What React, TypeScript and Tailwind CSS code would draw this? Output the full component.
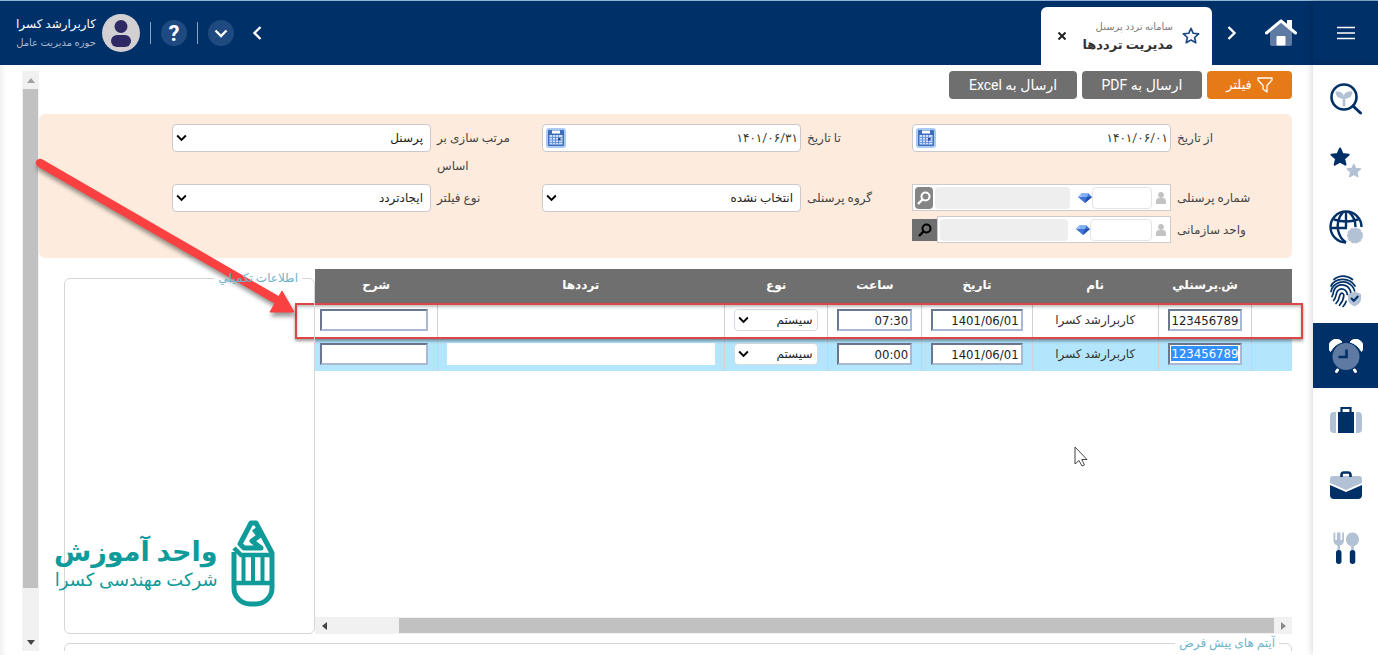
import React from "react";

const NAVY = "#003068";
const MIST = "#b3c1d4";

function SearchPlantIcon() {
  return (
    <svg viewBox="0 0 34 34" className="size-[34px]" fill="none">
      <circle cx="15" cy="15" r="12.500" stroke={NAVY} strokeWidth="2.600" />
      <path d="M24 24l7.500 7" stroke={NAVY} strokeWidth="3" strokeLinecap="round" />
      <path d="M6.500 9.500c4.500-.5 8 1 8.300 5C15 10.500 18.500 9 23.500 9.500c-.5 5-3 7-7.200 7v8h-2.600v-8c-4.200 0-6.700-2-7.200-7z" fill={MIST} />
    </svg>
  );
}

const STAR = "M12 1.800l3 6.600 7.200.8-5.400 4.800 1.600 7-6.400-3.600L5.600 21l1.600-7-5.400-4.800 7.200-.8z";

function StarsIcon() {
  return (
    <svg viewBox="0 0 34 34" className="size-[34px]">
      <path d={STAR} fill={NAVY} stroke={NAVY} strokeWidth="2.400" strokeLinejoin="round" transform="translate(1 1) scale(.84)" />
      <path d={STAR} fill={MIST} stroke={MIST} strokeWidth="2" strokeLinejoin="round" transform="translate(17 17) scale(.65)" />
    </svg>
  );
}

function GlobeIcon() {
  return (
    <svg viewBox="0 0 34 34" className="size-[34px]" fill="none" stroke={NAVY} strokeWidth="2.400">
      <path d="M32.500 17A15.500 15.500 0 1 0 17 32.500" />
      <path d="M5 9.500c7.500 2.500 16.500 2.500 24 0M2 18h16M17 1.500v15.500M14 2C9 8 8 14 9 20c1 5 3.500 9.500 8 12.500M20 2c4.500 4 6.500 9 6.500 15" />
      <circle cx="26" cy="25.500" r="7" fill={MIST} stroke={MIST} strokeWidth="2" strokeDasharray="3.200 .8" />
    </svg>
  );
}

function FingerprintIcon() {
  return (
    <svg viewBox="0 0 34 34" className="size-[34px]" fill="none" stroke={NAVY} strokeWidth="1.700" strokeLinecap="round">
      <path d="M5 5.500C10 1 18 1 23.500 5.500" />
      <path d="M2 12C6 4 20 2.500 26 12" />
      <path d="M2 17.500C4 8 16 4.500 23 12c1.300 1.500 2.200 3.200 2.600 5" />
      <path d="M3 22.500c1.500-2 1-4.500 2.500-7.500C9 9 18 9.500 21 16c.5 1 .8 2 .8 3" />
      <path d="M4.500 26.500c3-3 2-6.500 4-9.500 3-4 9.500-2 9.700 3.500" />
      <path d="M7 29.500c4-4 2.500-7 4.500-9.500 1.500-1.700 3.500-.5 3.300 1.800-.2 3.500-1.800 6.500-4.300 9.500" />
      <path d="M14 32.500c1.500-1.500 2.500-3.200 3.200-5.200" />
      <path d="M25.500 17.500l6.500 2.500v4.500c0 4-3 6.500-6.500 7.700-3.500-1.200-6.500-3.700-6.500-7.700V20z" fill={MIST} stroke="none" />
      <path d="M22.500 24.500l2.300 2.300 4-4.300" strokeWidth="2" />
    </svg>
  );
}

function AlarmIcon() {
  return (
    <svg viewBox="0 0 34 34" className="size-[34px]">
      <path d="M1.500 12.500A6.800 6.800 0 0 1 13 3C8 4.500 4.500 7.500 1.500 12.500zM32.500 12.500A6.800 6.800 0 0 0 21 3c5 1.500 8.500 4.500 11.500 9.500z" fill="#fff" stroke="#fff" strokeLinejoin="round" />
      <path d="M8.500 31l-1 1.500M25.500 31l1 1.500" stroke="#fff" strokeWidth="3" strokeLinecap="round" />
      <circle cx="17" cy="17.500" r="13.500" fill="#5f7aa2" />
      <path d="M17.500 10.500V18h-8" fill="none" stroke={NAVY} strokeWidth="2.600" />
    </svg>
  );
}

function SuitcaseIcon() {
  return (
    <svg viewBox="0 0 34 34" className="size-[34px]">
      <path d="M5 9h2v21H5a4 4 0 0 1-4-4V13a4 4 0 0 1 4-4zM29 9h-2v21h2a4 4 0 0 0 4-4V13a4 4 0 0 0-4-4z" fill={MIST} />
      <path d="M9 9h16v21H9z" fill={NAVY} />
      <path d="M12.500 9V5h9v4" fill="none" stroke={NAVY} strokeWidth="2.200" />
    </svg>
  );
}

function BriefcaseIcon() {
  return (
    <svg viewBox="0 0 34 34" className="size-[34px]">
      <path d="M4 9h26a3 3 0 0 1 3 3v4l-16 7L1 16v-4a3 3 0 0 1 3-3z" fill={MIST} />
      <path d="M1 18l16 7 16-7v10a4 4 0 0 1-4 4H5a4 4 0 0 1-4-4z" fill={NAVY} />
      <path d="M12.500 10V8c0-2 1-2.500 2.500-2.500h4c1.500 0 2.500.5 2.500 2.500v2" fill="none" stroke={NAVY} strokeWidth="2.600" />
    </svg>
  );
}

function CutleryIcon() {
  return (
    <svg viewBox="0 0 34 34" className="size-[34px]">
      <path d="M4.500 1.500v8c0 3 2 4.500 4 5v5h2.500v-5c2-.5 4-2 4-5v-8h-1.800v7.500h-1.700V1.500H8V9H6.300V1.500z" fill={MIST} />
      <path d="M23.500 1.500c4 0 6.500 3.500 6.500 7 0 3.300-2.200 6-5.200 6.700v4.300h-2.600v-4.300c-3-.7-5.200-3.400-5.200-6.700 0-3.500 2.500-7 6.500-7z" fill={MIST} />
      <rect x="7" y="19" width="5.500" height="14" rx="2.700" fill={NAVY} />
      <rect x="20.800" y="19" width="5.500" height="14" rx="2.700" fill={NAVY} />
    </svg>
  );
}

function HomeIcon() {
  return (
    <svg viewBox="0 0 34 30" className="h-[30px] w-[34px]">
      <path d="M6 14L17 4l11 10v12a2 2 0 0 1-2 2H8a2 2 0 0 1-2-2z" fill="#5f7ba3" />
      <path d="M23 2h5v9l-5-4.500z" fill="#fff" />
      <path d="M2.500 15L17 2.800 31.500 15" fill="none" stroke="#fff" strokeWidth="3" strokeLinejoin="round" strokeLinecap="round" />
      <rect x="12.500" y="18" width="9" height="9.500" rx="1" fill="#fff" />
    </svg>
  );
}

function Chevron({ d, className }: { d: "left" | "right" | "down"; className?: string }) {
  const path = d === "left" ? "M9.500 1L3.500 7l6 6" : d === "right" ? "M4.500 1l6 6-6 6" : "M1.500 4.500L7 10l5.500-5.500";
  return (
    <svg viewBox="0 0 14 14" className={className} fill="none" stroke="currentColor" strokeWidth="2.400">
      <path d={path} />
    </svg>
  );
}

function CalendarIcon() {
  return (
    <svg viewBox="0 0 20 20" className="size-5">
      <rect width="20" height="20" rx="3" fill="#a9caf5" />
      <rect x="2" y="2" width="16" height="16" rx="1" fill="#3f6dbd" />
      <rect x="6" y="2.500" width="8" height="3" fill="#fff" />
      <rect x="3.500" y="7" width="13" height="9.500" fill="#cfe0f8" />
      <path d="M3.500 9.500h13M3.500 12h13M3.500 14.500h13M6.500 7v9.500M9.500 7v9.500M12.500 7v9.500" stroke="#5b86cf" strokeWidth=".8" />
      <rect x="12" y="10" width="2.500" height="2.500" fill="#2b4c93" />
    </svg>
  );
}

function PersonIcon() {
  return (
    <svg viewBox="0 0 10 12" className="h-3 w-[10px] shrink-0" fill="#c3c3c3">
      <circle cx="5" cy="3" r="2.900" />
      <path d="M0 8.500C0 6.500 2 6 5 6s5 .5 5 2.500V12H0z" />
    </svg>
  );
}

function GemIcon() {
  return (
    <svg viewBox="0 0 14 10" className="h-[10px] w-[14px] shrink-0">
      <path d="M3.500.5h7L14 4 7 10 0 4z" fill="#3f74d6" />
      <path d="M3.500.5h7L9 4H5z" fill="#7fb0f5" />
      <path d="M9 4h5l-7 6z" fill="#2450a8" />
      <path d="M0 4l3.500-3.500L5 4z" fill="#9cc3fa" />
    </svg>
  );
}

function Lens() {
  return (
    <svg viewBox="0 0 14 14" className="size-[14px]" fill="none" stroke="currentColor" strokeWidth="2">
      <circle cx="8.500" cy="5.500" r="4" />
      <path d="M5.500 8.500L1 13" strokeWidth="2.400" />
    </svg>
  );
}

const menu = [
  { name: "جستجو", icon: <SearchPlantIcon /> },
  { name: "علاقه‌مندی‌ها", icon: <StarsIcon /> },
  { name: "پورتال", icon: <GlobeIcon /> },
  { name: "اثر انگشت", icon: <FingerprintIcon /> },
  { name: "تردد", icon: <AlarmIcon />, active: true },
  { name: "ماموریت", icon: <SuitcaseIcon /> },
  { name: "پرسنل", icon: <BriefcaseIcon /> },
  { name: "تغذیه", icon: <CutleryIcon /> },
];

function Header() {
  return (
    <header className="flex h-[65px] shrink-0 items-stretch border-t border-[#8fb4d6] bg-[#003068] text-white">
      <button aria-label="منو" className="flex w-[65px] items-center justify-center shadow-[0_0_8px_rgba(0,0,0,0.25)]">
        <svg viewBox="0 0 18 14" className="h-[14px] w-[18px]" stroke="#fff" strokeWidth="1.700">
          <path d="M0 1.500h18M0 7h18M0 12.500h18" />
        </svg>
      </button>
      <a href="#home" aria-label="خانه" className="mr-[15px] flex items-center">
        <HomeIcon />
      </a>
      <button aria-label="تب بعدی" className="ml-3 mr-[26px] flex items-center">
        <Chevron d="right" className="size-[14px]" />
      </button>
      <div className="mt-[6px] flex w-[171px] items-center rounded-t-md bg-white pr-3">
        <svg viewBox="0 0 24 24" className="size-[18px]" fill="none" stroke="#1d4a86" strokeWidth="2.200" strokeLinejoin="round">
          <path d={STAR} />
        </svg>
        <div className="mr-[9px] flex-1 whitespace-nowrap">
          <div className="text-[10px] leading-[17px] text-[#7c7c7c]">سامانه تردد پرسنل</div>
          <div className="text-[13px] font-bold leading-5 text-[#333]">مدیریت ترددها</div>
        </div>
        <button aria-label="بستن" className="ml-[17px] text-[#222]">
          <svg viewBox="0 0 8 8" className="size-2" stroke="currentColor" strokeWidth="2">
            <path d="M.5.5l7 7M7.500.5l-7 7" />
          </svg>
        </button>
      </div>
      <div className="flex-1" />
      <div className="flex items-center pl-4">
        <button aria-label="تب قبلی" className="ml-[17px]">
          <Chevron d="left" className="size-[14px]" />
        </button>
        <button aria-label="بیشتر" className="flex size-[26px] items-center justify-center rounded-full bg-[#1f4a80]">
          <Chevron d="down" className="size-[14px]" />
        </button>
        <span className="mx-[10px] h-[22px] w-px bg-[#8ba3c2]" />
        <button aria-label="راهنما" className="flex size-[26px] items-center justify-center rounded-full bg-[#1f4a80] font-[Roboto,sans-serif] text-[22px] font-bold">
          ?
        </button>
        <span className="mx-[10px] h-[22px] w-px bg-[#8ba3c2]" />
        <svg viewBox="0 0 38 38" className="size-[38px]">
          <circle cx="19" cy="19" r="19" fill="#d3d0d4" />
          <circle cx="19" cy="12.500" r="6.500" fill="#2f2a63" />
          <rect x="9" y="21" width="20" height="12" rx="6" fill="#2f2a63" />
        </svg>
        <div className="mr-[6px] whitespace-nowrap">
          <div className="text-xs leading-[19px]">کاربرارشد کسرا</div>
          <div className="text-[10px] leading-[18px] text-[#a9bad1]">حوزه مدیریت عامل</div>
        </div>
      </div>
    </header>
  );
}

function Field({ id, label, children }: { id: string; label: string; children: React.ReactNode }) {
  return (
    <div className="flex items-start gap-[6px]">
      <label htmlFor={id} className="w-[75px] shrink-0 text-left text-xs leading-7 text-[#444]">
        {label}
      </label>
      <div className="min-w-0 flex-1">{children}</div>
    </div>
  );
}

function DateBox({ id, value }: { id: string; value: string }) {
  return (
    <div className="flex h-7 items-center rounded border border-[#cdc8cc] bg-white pl-[3px]">
      <input id={id} defaultValue={value} className="h-full min-w-0 flex-1 bg-transparent pr-[2px] text-right text-xs text-[#333] outline-none" />
      <button aria-label="تقویم">
        <CalendarIcon />
      </button>
    </div>
  );
}

function SelectBox({ id, value }: { id: string; value: string }) {
  return (
    <div className="relative">
      <select id={id} className="h-7 w-full appearance-none rounded border border-[#cdc8cc] bg-white pr-[7px] text-xs text-[#222]">
        <option>{value}</option>
      </select>
      <Chevron d="down" className="pointer-events-none absolute left-1 top-2 size-[11px] text-black" />
    </div>
  );
}

function Filters() {
  return (
    <section className="grid grid-cols-3 gap-x-[30px] gap-y-1 rounded-md bg-[#fdecdd] pb-[14px] pl-[133px] pr-10 pt-[10px]">
      <Field id="from" label="از تاریخ">
        <DateBox id="from" value="۱۴۰۱/۰۶/۰۱" />
      </Field>
      <Field id="to" label="تا تاریخ">
        <DateBox id="to" value="۱۴۰۱/۰۶/۳۱" />
      </Field>
      <Field id="sort" label="مرتب سازی بر اساس">
        <SelectBox id="sort" value="پرسنل" />
      </Field>
      <Field id="person" label="شماره پرسنلی">
        <div className="flex h-[27px] items-center border border-[#cfcacb] bg-white pl-[2px] pr-1">
          <PersonIcon />
          <input id="person" className="mr-1 h-[22px] w-[60px] rounded border border-[#e4e4e4] bg-white" />
          <span className="flex w-[22px] justify-start">
            <GemIcon />
          </span>
          <input aria-label="نام پرسنل" readOnly className="h-[22px] min-w-0 flex-1 rounded bg-[#eeeeee]" />
          <button aria-label="جستجوی پرسنل" className="mr-[2px] flex h-[22px] w-[18px] items-center justify-center rounded-sm bg-[#858585] text-white">
            <Lens />
          </button>
        </div>
      </Field>
      <Field id="group" label="گروه پرسنلی">
        <SelectBox id="group" value="انتخاب نشده" />
      </Field>
      <Field id="kind" label="نوع فیلتر">
        <SelectBox id="kind" value="ایجادتردد" />
      </Field>
      <Field id="unit" label="واحد سازمانی">
        <div className="flex h-[27px] items-center">
          <div className="flex h-full min-w-0 flex-1 items-center border border-[#cfcacb] bg-white pl-[2px] pr-1">
            <PersonIcon />
            <input id="unit" className="mr-1 h-[22px] w-[62px] rounded border border-[#e4e4e4] bg-white" />
            <span className="flex w-[22px] justify-start">
              <GemIcon />
            </span>
            <input aria-label="نام واحد" readOnly className="h-[22px] min-w-0 flex-1 rounded bg-[#eeeeee]" />
          </div>
          <button aria-label="جستجوی واحد" className="flex h-[22px] w-[25px] items-center justify-center bg-[#6f6f6f] text-black">
            <Lens />
          </button>
        </div>
      </Field>
    </section>
  );
}

const rows = [
  { code: "123456789", name: "کاربرارشد کسرا", date: "1401/06/01", time: "07:30", kind: "سیستم", selected: false },
  { code: "123456789", name: "کاربرارشد کسرا", date: "1401/06/01", time: "00:00", kind: "سیستم", selected: true },
];

const gridInput =
  "block h-[22px] w-full border-2 border-b-[#a9b8d3] border-l-[#6b7790] border-r-[#a9b8d3] border-t-[#6b7790] bg-white pr-[2px] text-right font-['DejaVu_Sans_Condensed','DejaVu_Sans',sans-serif] text-[13px] leading-[18px] text-[#222]";

function Records() {
  const cell = "border-l border-[#d5cfd2] px-[9px] py-0";
  return (
    <div className="relative flex min-w-0 flex-1 flex-col">
      <table className="w-full table-fixed border-collapse">
        <colgroup>
          <col className="w-[4.1%]" />
          <col className="w-[9.6%]" />
          <col className="w-[12.9%]" />
          <col className="w-[11.3%]" />
          <col className="w-[9.6%]" />
          <col className="w-[10.6%]" />
          <col className="w-[29.4%]" />
          <col className="w-[12.5%]" />
        </colgroup>
        <thead>
          <tr className="h-[34px] bg-[#6f6f6f] text-xs text-white">
            <th />
            {["ش.پرسنلي", "نام", "تاریخ", "ساعت", "نوع", "ترددها", "شرح"].map((h) => (
              <th key={h} className="pb-[2px] font-semibold">
                {h}
              </th>
            ))}
          </tr>
        </thead>
        <tbody>
          {rows.map((r, i) => (
            <tr key={i} className={r.selected ? "h-[34px] bg-[#b3e5fd]" : "h-[34px] bg-white"}>
              <td className={cell} />
              <td className={cell}>
                {r.selected ? (
                  <div className={gridInput}>
                    <span className="bg-[#3390ff] text-white">{r.code}</span>
                  </div>
                ) : (
                  <input aria-label="شماره پرسنلی" defaultValue={r.code} className={gridInput} />
                )}
              </td>
              <td className={cell + " text-center text-xs text-[#333]"}>{r.name}</td>
              <td className={cell}>
                <input aria-label="تاریخ" defaultValue={r.date} className={gridInput} />
              </td>
              <td className={cell}>
                <input aria-label="ساعت" defaultValue={r.time} className={gridInput} />
              </td>
              <td className={cell}>
                <div className="relative">
                  <select aria-label="نوع" className="block h-[22px] w-full appearance-none rounded border border-[#d5d9e2] bg-white pr-[5px] text-xs text-[#222]">
                    <option>{r.kind}</option>
                  </select>
                  <Chevron d="down" className="pointer-events-none absolute left-1 top-[5px] size-[11px] text-black" />
                </div>
              </td>
              <td className={cell}>{r.selected && <input aria-label="ترددها" className="block h-[22px] w-full bg-white" />}</td>
              <td className="py-0 pl-[5px] pr-[9px]">
                <input aria-label="شرح" className={gridInput} />
              </td>
            </tr>
          ))}
        </tbody>
      </table>
      <div className="flex-1" />
      <div className="flex h-[17px] items-stretch bg-[#f1f1f1]">
        <span className="flex w-[18px] items-center justify-center">
          <svg viewBox="0 0 5 8" className="h-2 w-[5px]" fill="#8a8a8a"><path d="M0 0l5 4-5 4z" /></svg>
        </span>
        <div className="flex min-w-0 flex-1 py-px">
          <div className="w-[93%] bg-[#c1c1c1]" />
        </div>
        <span className="flex w-[18px] items-center justify-center">
          <svg viewBox="0 0 5 8" className="h-2 w-[5px]" fill="#444"><path d="M5 0L0 4l5 4z" /></svg>
        </span>
      </div>

      <div className="pointer-events-none absolute -left-5 -right-[11px] top-[34px] h-9 border-[2px] border-[#dd4546] shadow-[0_2px_3px_rgba(0,0,0,0.4),inset_0_2px_3px_rgba(0,0,0,0.25)]" />
      <svg viewBox="0 0 290 180" className="pointer-events-none absolute -left-[285px] -top-[118px] h-[180px] w-[290px] drop-shadow-[1px_4px_2px_rgba(0,0,0,0.4)]">
        <path d="M10 12L247 149" stroke="#f94141" strokeWidth="8.500" strokeLinecap="round" />
        <path d="M264 161L240 161 252 140z" fill="#f94141" stroke="#f94141" strokeWidth="1" strokeLinejoin="round" />
      </svg>
      <svg viewBox="0 0 14 21" className="pointer-events-none absolute right-[204px] top-[177px] h-[21px] w-[14px]">
        <path d="M1 1v17l4-3.500 3 5.500 2.500-1.200-2.800-5.300H13z" fill="#fff" stroke="#444" />
      </svg>
    </div>
  );
}

function Watermark() {
  return (
    <div className="absolute -left-[11px] bottom-[26px] flex items-center gap-[13px] whitespace-nowrap text-[#0f9b99]">
      <svg viewBox="0 0 44 87" className="h-[87px] w-11" fill="none" stroke="currentColor" strokeWidth="5">
        <path d="M3 32v36a16 16 0 0 0 16 16h6a16 16 0 0 0 16-16V33L25 3h-5L9 24l4 4h17l-9-7 7-5-5-7" strokeLinejoin="round" />
        <path d="M3 28l7 7h31M3 63h38" strokeWidth="4.500" />
        <path d="M12.500 36v27M22 36v27M31.500 36v27" strokeWidth="4" />
      </svg>
      <div>
        <div className="text-[27px] font-bold leading-8">واحد آموزش</div>
        <div className="text-lg leading-6">شرکت مهندسی کسرا</div>
      </div>
    </div>
  );
}

export default function App() {
  return (
    <div dir="rtl" className="flex min-h-screen flex-col overflow-hidden bg-white font-[Roboto,'DejaVu_Sans',sans-serif]">
      <Header />
      <div className="flex flex-1 items-stretch">
        <nav className="z-10 w-[65px] shrink-0 bg-white pt-[2px] shadow-[0_0_8px_rgba(0,0,0,0.2)]">
          {menu.map((m) => (
            <a
              key={m.name}
              href="#menu"
              aria-label={m.name}
              className={m.active ? "flex h-[65px] items-center justify-center bg-[#003068]" : "flex h-16 items-center justify-center"}
            >
              {m.icon}
            </a>
          ))}
        </nav>
        <main className="flex min-w-0 flex-1 pb-1 pl-[22px] pr-[21px] pt-[6px] shadow-[inset_6px_0_6px_-4px_rgba(0,0,0,0.08)]">
          <div className="flex min-w-0 flex-1 flex-col">
            <div className="mb-[15px] flex gap-[5px] text-sm text-white">
              <button className="flex h-7 w-[85px] items-center justify-center gap-[5px] rounded bg-[#e67a17] text-[13px]">
                <svg viewBox="0 0 16 16" className="size-4" fill="none" stroke="#fff" strokeWidth="1.300" strokeLinejoin="round">
                  <path d="M1 1h14v2l-5 5.500V15l-4-3V8.500L1 3z" />
                </svg>
                فیلتر
              </button>
              <button className="h-7 w-[120px] rounded bg-[#6f6f6f]">ارسال به PDF</button>
              <button className="h-7 w-32 rounded bg-[#6f6f6f]">ارسال به Excel</button>
            </div>
            <Filters />
            <div className="mt-[11px] flex min-h-[365px] flex-1">
              <Records />
              <fieldset className="relative ml-[25px] w-[251px] shrink-0 rounded-md border border-[#d6d6d6]">
                <legend className="mr-3 px-1 text-xs leading-[18px] text-[#6fb3cc]">اطلاعات تکميلي</legend>
                <Watermark />
              </fieldset>
            </div>
            <div className="ml-[25px] h-[17px] overflow-hidden">
              <fieldset className="h-10 rounded-md border border-[#d6d6d6]">
                <legend className="mr-3 px-1 text-xs leading-[18px] text-[#6fb3cc]">آیتم های پیش فرض</legend>
              </fieldset>
            </div>
          </div>
          <div className="flex w-[17px] shrink-0 flex-col bg-[#f1f1f1]">
            <span className="flex h-[18px] items-center justify-center">
              <svg viewBox="0 0 8 5" className="h-[5px] w-2" fill="#a0a0a0"><path d="M0 5l4-5 4 5z" /></svg>
            </span>
            <div className="flex-1 px-px">
              <div className="h-[499px] bg-[#c1c1c1]" />
            </div>
            <span className="flex h-[18px] items-center justify-center">
              <svg viewBox="0 0 8 5" className="h-[5px] w-2" fill="#444"><path d="M0 0l4 5 4-5z" /></svg>
            </span>
          </div>
        </main>
      </div>
    </div>
  );
}
